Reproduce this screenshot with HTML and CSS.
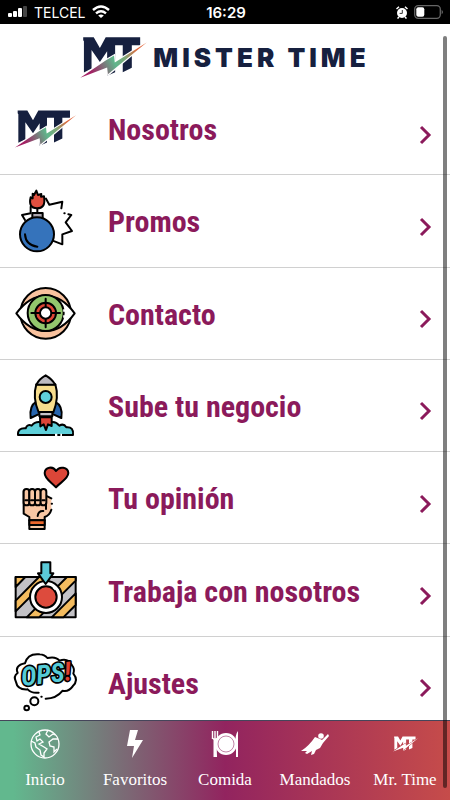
FILE: index.html
```html
<!DOCTYPE html>
<html lang="es">
<head>
    <meta charset="UTF-8">
    <meta name="viewport" content="width=device-width, initial-scale=1.0">
    <title>Mister Time</title>
    <link rel="stylesheet" href="styles.css">
</head>
<body>
    <!-- shared logo -->
    <svg class="defs" aria-hidden="true">
        <defs>
            <linearGradient id="boltColor" gradientUnits="userSpaceOnUse" x1="45" y1="150" x2="228" y2="60">
                <stop offset="0.15" stop-color="#a31f63"/>
                <stop offset="0.5" stop-color="#5fb78c"/>
                <stop offset="0.65" stop-color="#7fa777"/>
                <stop offset="0.85" stop-color="#e0663c"/>
            </linearGradient>
            <mask id="boltGap" maskUnits="userSpaceOnUse" x="40" y="40" width="195" height="120">
                <rect x="40" y="40" width="195" height="120" fill="#fff"/>
                <path d="M45 155L116 107L138 94L140 113L228 58L122 146L119 127Z" fill="#000" stroke="#000" stroke-width="6"/>
            </mask>
        </defs>
        <symbol id="logo" viewBox="45 43 183 113">
            <path class="logo-letters" mask="url(#boltGap)" d="M53 44H82L99 73L115 44H210V66H187V128L162 140V66H141V140L119 150V82L99 112L76 79V130L55 141V55L53 52Z"/>
            <path class="logo-bolt" d="M45 155L116 107L138 94L140 113L228 58L121 146L119 127Z"/>
        </symbol>
    </svg>

    <div class="status-bar">
        <div class="status-left">
            <svg width="20" height="12" viewBox="0 0 20 12">
                <rect x="0" y="7" width="4" height="4" rx="1" fill="#fff"/>
                <rect x="5" y="5" width="4" height="6" rx="1" fill="#fff"/>
                <rect x="10" y="2" width="4" height="9" rx="1" fill="#fff"/>
                <rect x="15" y="0" width="4" height="11" rx="1" fill="#444"/>
            </svg>
            <span>TELCEL</span>
            <svg width="18" height="14" viewBox="0 0 18 14" fill="none" stroke="#fff" stroke-width="2.4">
                <path d="M1 5Q9 -2 17 5"/>
                <path d="M4 8.3Q9 4 14 8.3"/>
                <path d="M9 13L6.2 10.6Q9 8.6 11.8 10.6Z" fill="#fff" stroke="none"/>
            </svg>
        </div>
        <div class="status-time">16:29</div>
        <div class="status-right">
            <svg width="12" height="13" viewBox="0 0 12 13">
                <circle cx="6" cy="7" r="5" fill="#fff"/>
                <path d="M0.5 3L3 0.8M11.5 3L9 0.8M1.5 12.5L3 11M10.5 12.5L9 11" stroke="#fff" stroke-width="1.5"/>
                <path d="M6.3 4V7.4H3.6" fill="none" stroke="#333" stroke-width="1"/>
            </svg>
            <svg width="30" height="14" viewBox="0 0 30 14">
                <rect x="0.7" y="0.7" width="25.6" height="12.6" rx="3.5" fill="none" stroke="#666" stroke-width="1.3"/>
                <rect x="2.3" y="2.3" width="8" height="9.4" rx="2" fill="#fff"/>
                <path d="M27.7 4.7Q30 7 27.7 9.3Z" fill="#777"/>
            </svg>
        </div>
    </div>

    <header class="header">
        <svg class="header-logo"><use href="#logo"/></svg>
        <h1>MISTER TIME</h1>
    </header>

    <nav class="menu">
        <a href="#nosotros" class="menu-item">
            <span class="menu-icon"><svg class="row-logo"><use href="#logo"/></svg></span>
            <span class="menu-text">Nosotros</span>
            <svg class="chevron" viewBox="0 0 14 20"><path d="M2 2L10 10L2 18"/></svg>
        </a>
        <a href="#promos" class="menu-item">
            <svg class="menu-icon" viewBox="0 1 300 240">
                <g class="line">
                    <path d="M138 54L148 72L187 63L184 83M205 101L214 103L197 125L216 151L187 161L187 191L158 180M66 103L92 98M66 103L75 118M92 98V78" fill="none"/>
                    <path d="M193 98H194"/>
                    <path d="M112 82V98"/>
                    <path d="M98 39L102 43L109 30L114 43L124 40L123 48L132 47C137 75 126 83 111 83C92 83 87 70 92 50L98 53Z" fill="#df4f3f"/>
                    <rect x="97" y="97" width="31" height="18" fill="#aaa5ad"/>
                    <circle cx="111" cy="161" r="51" fill="#3573bb"/>
                    <path d="M75 161Q77 193 112 198" fill="none"/>
                </g>
            </svg>
            <span class="menu-text">Promos</span>
            <svg class="chevron" viewBox="0 0 14 20"><path d="M2 2L10 10L2 18"/></svg>
        </a>
        <a href="#contacto" class="menu-item">
            <svg class="menu-icon" viewBox="0 -6 300 240">
                <g class="line">
                    <circle cx="137" cy="115" r="76" fill="#f9c29e"/>
                    <path d="M49 115Q88 62 137 62T224 115Q186 168 137 168T49 115Z" fill="#fff"/>
                    <circle cx="137" cy="114" r="54" fill="#93c76d"/>
                    <circle cx="137" cy="114" r="31" fill="#df4636"/>
                    <circle cx="137" cy="114" r="17" fill="#fff"/>
                    <path d="M137 71V96M137 132V157M94 114H119M155 114H180" fill="none"/>
                </g>
                <path d="M193 103V110M193 121V128" stroke="#fff" stroke-width="7"/>
            </svg>
            <span class="menu-text">Contacto</span>
            <svg class="chevron" viewBox="0 0 14 20"><path d="M2 2L10 10L2 18"/></svg>
        </a>
        <a href="#negocio" class="menu-item">
            <svg class="menu-icon" viewBox="0 0 300 240">
                <g class="line">
                    <path d="M54 210Q52 188 77 190Q82 176 95 182Q106 168 124 172H153Q166 168 178 182Q191 174 199 187Q222 185 219 210Z" fill="#5fd0da"/>
                    <path d="M109 110Q87 123 92 159L115 148M165 110Q190 123 184 159L160 148" fill="#2765ae"/>
                    <path d="M109 58H166Q178 96 160 142H116Q97 98 109 58Z" fill="#f7dd8d"/>
                    <path d="M137 31Q156 42 166 59H109Q118 41 137 31Z" fill="#bdbbc1"/>
                    <rect x="118" y="141" width="39" height="13" fill="#c6c4c9"/>
                    <circle cx="137" cy="96" r="18" fill="#5fd0da"/>
                    <path d="M120 157H155V183L144 178L138 195L131 178L121 184Z" fill="#dd4537"/>
                </g>
                <path d="M165 210H172M181 210H186" stroke="#fff" stroke-width="8"/>
            </svg>
            <span class="menu-text">Sube tu negocio</span>
            <svg class="chevron" viewBox="0 0 14 20"><path d="M2 2L10 10L2 18"/></svg>
        </a>
        <a href="#opinion" class="menu-item">
            <svg class="menu-icon" viewBox="0 7 300 240">
                <g class="line">
                    <path d="M168 95C155 80 133 69 134 52C135 34 159 30 168 46C178 30 204 34 205 52C205 69 181 80 168 95Z" fill="#dc4638"/>
                    <path d="M70 105V174L88 184V194H134V184Q153 176 154 160V128L140 122V105Z" fill="#f9c7a4" stroke="none"/>
                    <path d="M71 106V174L88 184V194M134 194V184Q149 179 154 162M154 128L142 122M155 144H156" fill="none"/>
                    <rect x="71" y="100" width="17" height="49" rx="8" fill="#f9c7a4"/>
                    <rect x="88" y="100" width="17" height="49" rx="8" fill="#f9c7a4"/>
                    <rect x="105" y="100" width="17" height="49" rx="8" fill="#f9c7a4"/>
                    <rect x="122" y="100" width="17" height="49" rx="8" fill="#f9c7a4"/>
                    <path d="M76 134H83M93 134H100M110 134H117M127 134H134M138 145V160M113 181Q115 165 130 166" fill="none"/>
                    <path d="M88 194H134V220H88Z" fill="#f9c7a4"/>
                    <path d="M88 194H134V208H88Z" fill="#ec662b"/>
                </g>
            </svg>
            <span class="menu-text">Tu opinión</span>
            <svg class="chevron" viewBox="0 0 14 20"><path d="M2 2L10 10L2 18"/></svg>
        </a>
        <a href="#trabaja" class="menu-item">
            <svg class="menu-icon" viewBox="0 0 300 240">
                <g class="line">
                    <rect x="47" y="81" width="180" height="121" fill="#c3c2c6"/>
                    <path d="M47 81H76L47 111ZM47 152L117 81H150L47 184ZM80 202L201 81H227V92L117 202ZM155 202L227 130V165L190 202Z" fill="#f4bc5f"/>
                    <circle cx="138" cy="141" r="48" fill="#fff"/>
                    <circle cx="138" cy="141" r="32" fill="#dd4b3d"/>
                    <path d="M124 37H151V70H160L137 102L114 70H124Z" fill="#5bcbd8"/>
                </g>
                <path d="M160 111L167 118" stroke="#fff" stroke-width="7"/>
            </svg>
            <span class="menu-text">Trabaja con nosotros</span>
            <svg class="chevron" viewBox="0 0 14 20"><path d="M2 2L10 10L2 18"/></svg>
        </a>
        <a href="#ajustes" class="menu-item">
            <svg class="menu-icon" viewBox="0 6 300 240">
                <g class="line">
                    <path d="M116 158Q96 161 83 148Q52 150 48 126Q39 108 53 99Q43 77 75 70Q83 39 119 43Q134 44 142 54Q168 48 178 62Q205 53 216 76Q225 86 220 101Q237 121 218 139Q206 156 188 152Q169 176 137 176" fill="none"/>
                    <path d="M124 170H125"/>
                    <circle cx="103" cy="184" r="12" fill="#fff"/>
                    <circle cx="80" cy="204" r="7" fill="#fff"/>
                </g>
                <g class="ops">
                    <text x="67" y="138" transform="rotate(-7 67 138)">OPS<tspan fill="#e0412f">!</tspan></text>
                </g>
            </svg>
            <span class="menu-text">Ajustes</span>
            <svg class="chevron" viewBox="0 0 14 20"><path d="M2 2L10 10L2 18"/></svg>
        </a>
    </nav>

    <nav class="tab-bar">
        <a href="#inicio" class="tab">
            <svg class="tab-icon" viewBox="0 0 30 30" fill="none" stroke="#fff" stroke-width="1.3">
                <circle cx="15" cy="15" r="14"/>
                <path d="M9 3L10 6L6 8L7 12L10 10L13 13L9 15L14 18L17 20L14 24L14 28L11 26L10 21L6 18L5 14L1 12"/>
                <path d="M18 1L16 5L19 8L23 5L25 6M28 10L23 10L19 13L20 17L24 18L24 23L27 20"/>
            </svg>
            <span>Inicio</span>
        </a>
        <a href="#favoritos" class="tab">
            <svg class="tab-icon" viewBox="0 0 30 30"><path d="M10 1H18L15 11H23L12 29L14 17H7Z" fill="#fff"/></svg>
            <span>Favoritos</span>
        </a>
        <a href="#comida" class="tab">
            <svg class="tab-icon" viewBox="0 0 30 30">
                <circle cx="16" cy="15" r="11" fill="#fff"/>
                <circle cx="16" cy="15" r="8" fill="none" stroke="#97336b" stroke-width="0.6"/>
                <path d="M2.5 2V10M5 2V10M7.5 2V10M2.5 9Q5 12 7.5 9" fill="none" stroke="#fff" stroke-width="1.4"/>
                <path d="M3.5 10H6.5L7 28H3.5Z" fill="#fff"/>
                <path d="M28 2Q25 5 25 17H26V28H28Z" fill="#fff"/>
            </svg>
            <span>Comida</span>
        </a>
        <a href="#mandados" class="tab">
            <svg class="tab-icon" viewBox="0 0 30 30" fill="#fff">
                <circle cx="21" cy="7" r="2.8"/>
                <path d="M28 5L29 7L23 14L20 19L16 21L14 25L11 26L12 22L7 25L5 24L7 22L1 22Q9 17 15 8L20 10L22 11Z"/>
            </svg>
            <span>Mandados</span>
        </a>
        <a href="#mrtime" class="tab">
            <span class="tab-icon"><svg class="tab-logo"><use href="#logo"/></svg></span>
            <span>Mr. Time</span>
        </a>
    </nav>

    <div class="scroll-thumb"></div>
</body>
</html>
```

FILE: styles.css
```css
* {
    box-sizing: border-box;
}
body {
    margin: 0;
    min-height: 100vh;
    padding-bottom: 71px; /* room for the tab bar */
    display: flex;
    flex-direction: column;
    background-color: white;
    font-family: "Liberation Sans", Arial, sans-serif;
}
a {
    color: inherit;
    text-decoration: none;
}
svg {
    display: block;
}
.defs {
    position: absolute;
    width: 0;
    height: 0;
}
.logo-letters {
    fill: var(--letters, #16203f);
}
.logo-bolt {
    fill: var(--bolt, url(#boltColor));
}

/* status bar */
.status-bar {
    display: grid;
    grid-template-columns: 1fr auto 1fr;
    align-items: center;
    height: 24px;
    padding: 0 6px 0 8px;
    background-color: black;
    color: white;
    font-family: Inter, "Liberation Sans", sans-serif;
    font-size: 14px;
}
.status-left,
.status-right {
    display: flex;
    align-items: center;
    gap: 6px;
}
.status-right {
    justify-content: flex-end;
}
.status-time {
    font-size: 15px;
    font-weight: 600;
}

/* header */
.header {
    display: flex;
    align-items: center;
    justify-content: center;
    gap: 6px;
    height: 59px;
    padding-top: 8px;
}
.header-logo {
    width: 67px;
    height: 41px;
}
.header h1 {
    margin: 0;
    color: #16203f;
    font-family: Inter, "Liberation Sans", sans-serif;
    font-size: 26px;
    font-weight: 900;
    letter-spacing: 4px;
}

/* menu */
.menu {
    flex: 1;
    display: grid;
    grid-auto-rows: 1fr;
}
.menu-item {
    display: flex;
    align-items: center;
    gap: 8px;
    padding-right: 17px;
    border-bottom: 1px solid #d0d0d0;
    color: #8b1a5b;
}
.menu-icon {
    flex: none;
    width: 100px;
    height: 80px;
}
span.menu-icon {
    display: flex;
    align-items: center;
    padding-left: 15px;
}
.row-logo {
    width: 61px;
    height: 38px;
}
.line {
    stroke: black;
    stroke-width: 6;
    stroke-linecap: round;
    stroke-linejoin: round;
}
.ops {
    font-family: "Roboto Condensed", "Liberation Sans Narrow", sans-serif;
    font-size: 78px;
    font-weight: bold;
    font-style: italic;
    fill: #55cbd6;
    stroke: black;
    stroke-width: 10;
    stroke-linejoin: round;
    paint-order: stroke;
}
.menu-text {
    flex: 1;
    padding-top: 3px;
    font-family: "Liberation Sans Narrow", "Roboto Condensed", "Open Sans Condensed", "Liberation Sans", sans-serif;
    font-size: 30px;
    font-weight: bold;
    line-height: 36px;
}
.chevron {
    width: 14px;
    height: 32px;
    padding-top: 12px;
    fill: none;
    stroke: #8b1a5b;
    stroke-width: 3;
}

/* tab bar */
.tab-bar {
    position: fixed;
    left: 0;
    right: 0;
    bottom: 0;
    display: grid;
    grid-template-columns: repeat(5, 1fr);
    height: 80px;
    border-top: 1px solid #45455a;
    background: linear-gradient(to right, #62b88e 3%, #92245f 50%, #c64c4a 100%);
    color: white;
    font-family: "Liberation Serif", serif;
    font-size: 17px;
}
.tab {
    display: flex;
    flex-direction: column;
    align-items: center;
    gap: 10px;
    padding-top: 8px;
    line-height: 22px;
}
.tab-icon {
    width: 30px;
    height: 30px;
}
span.tab-icon {
    display: flex;
    align-items: center;
    justify-content: center;
}
.tab-logo {
    --letters: white;
    --bolt: white;
    width: 25px;
    height: 16px;
}

.scroll-thumb {
    position: fixed;
    top: 36px;
    right: 3px;
    bottom: 12px;
    width: 4px;
    border-radius: 2px;
    background-color: rgba(0, 0, 0, 0.5);
}
```
